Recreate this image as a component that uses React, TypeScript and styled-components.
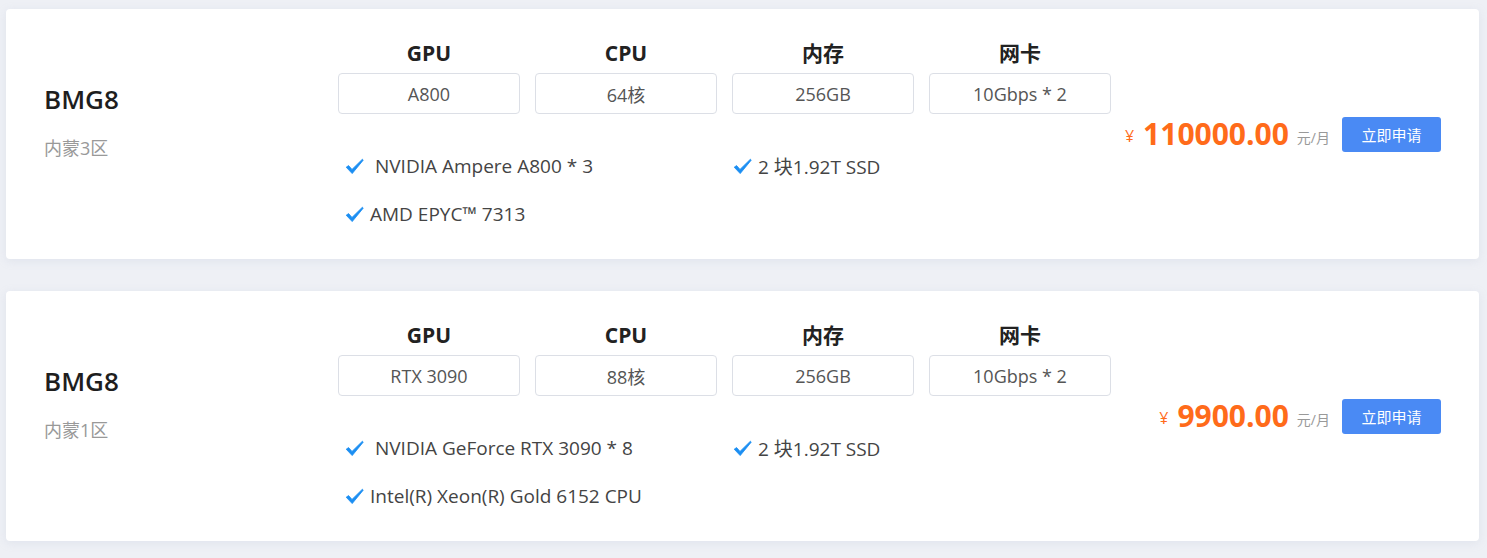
import styled, { createGlobalStyle } from "styled-components";

const GlobalStyle = createGlobalStyle`
  html, body {
    margin: 0;
    padding: 0;
    background: #eef0f5;
    font-family: "Open Sans", "Noto Sans CJK SC", sans-serif;
  }
`;

const Page = styled.div`
  display: flex;
  flex-direction: column;
  gap: 32px;
  padding: 9px 8px 17px 6px;
`;

const Card = styled.div`
  display: flex;
  align-items: center;
  height: 250px;
  padding: 0 38px;
  background: #fff;
  border-radius: 4px;
  box-shadow: 0 2px 10px rgba(160, 170, 200, 0.18);
`;

const Left = styled.div`
  width: 294px;
  flex-shrink: 0;
  padding-bottom: 27px;
`;

const Title = styled.div`
  font-size: 26px;
  line-height: 36px;
  font-weight: 600;
  color: #1e1e1e;
`;

const Region = styled.div`
  margin-top: 19px;
  font-size: 18px;
  line-height: 24px;
  color: #999;
`;

const Specs = styled.div`
  padding-top: 8px;
  flex-shrink: 0;
`;

const SpecGrid = styled.div`
  display: grid;
  grid-template-columns: repeat(4, 182px);
  column-gap: 15px;
`;

const SpecHead = styled.div`
  text-align: center;
  font-size: 21px;
  line-height: 30px;
  font-weight: 700;
  color: #222;
`;

const SpecBox = styled.div`
  margin-top: 5px;
  height: 41px;
  box-sizing: border-box;
  border: 1px solid #dcdfe6;
  border-radius: 4px;
  display: flex;
  align-items: center;
  justify-content: center;
  font-size: 18px;
  color: #555;
`;

const Features = styled.div`
  margin-top: 28px;
  display: grid;
  grid-template-columns: 388px 384px;
`;

const Feature = styled.div`
  display: flex;
  align-items: center;
  gap: 6px;
  height: 48px;
  padding-left: 7px;
  font-size: 19px;
  color: #444;
  white-space: pre;
`;

const Price = styled.div`
  flex: 1;
  display: flex;
  align-items: center;
  justify-content: flex-end;
`;

const Yen = styled.span`
  font-size: 16px;
  color: #ff6b1a;
  margin-right: 9px;
  margin-top: 4px;
`;

const Amount = styled.span`
  font-size: 30px;
  font-weight: 700;
  color: #ff6b1a;
  line-height: 36px;
`;

const Unit = styled.span`
  font-size: 14px;
  color: #999;
  margin-left: 8px;
  margin-top: 6px;
`;

const Apply = styled.button`
  margin-left: 12px;
  width: 99px;
  height: 35px;
  border: none;
  border-radius: 3px;
  background: #4a8af4;
  color: #fff;
  font-family: inherit;
  font-size: 15px;
  cursor: pointer;
`;

const Check = () => (
  <svg width="19" height="17" viewBox="0 0 19 17">
    <path
      d="M1.2 9.2 L3.6 7.6 L7 11.4 L17.4 1.2 L18.2 2.2 L7.2 15.6 Z"
      fill="#1b8ef2"
      stroke="#1b8ef2"
      strokeWidth="0.8"
      strokeLinejoin="round"
    />
  </svg>
);

type Server = {
  name: string;
  region: string;
  specs: string[];
  features: string[];
  price: string;
};

const heads = ["GPU", "CPU", "内存", "网卡"];

const servers: Server[] = [
  {
    name: "BMG8",
    region: "内蒙3区",
    specs: ["A800", "64核", "256GB", "10Gbps * 2"],
    features: [" NVIDIA Ampere A800 * 3", "2 块1.92T SSD", "AMD EPYC™ 7313"],
    price: "110000.00",
  },
  {
    name: "BMG8",
    region: "内蒙1区",
    specs: ["RTX 3090", "88核", "256GB", "10Gbps * 2"],
    features: [" NVIDIA GeForce RTX 3090 * 8", "2 块1.92T SSD", "Intel(R) Xeon(R) Gold 6152 CPU"],
    price: "9900.00",
  },
];

export default function App() {
  return (
    <>
      <GlobalStyle />
      <Page>
        {servers.map((s, i) => (
          <Card key={i}>
            <Left>
              <Title>{s.name}</Title>
              <Region>{s.region}</Region>
            </Left>
            <Specs>
              <SpecGrid>
                {heads.map((h, j) => (
                  <div key={h}>
                    <SpecHead>{h}</SpecHead>
                    <SpecBox>{s.specs[j]}</SpecBox>
                  </div>
                ))}
              </SpecGrid>
              <Features>
                {s.features.map((f) => (
                  <Feature key={f}>
                    <Check />
                    {f}
                  </Feature>
                ))}
              </Features>
            </Specs>
            <Price>
              <Yen>¥</Yen>
              <Amount>{s.price}</Amount>
              <Unit>元/月</Unit>
              <Apply>立即申请</Apply>
            </Price>
          </Card>
        ))}
      </Page>
    </>
  );
}
